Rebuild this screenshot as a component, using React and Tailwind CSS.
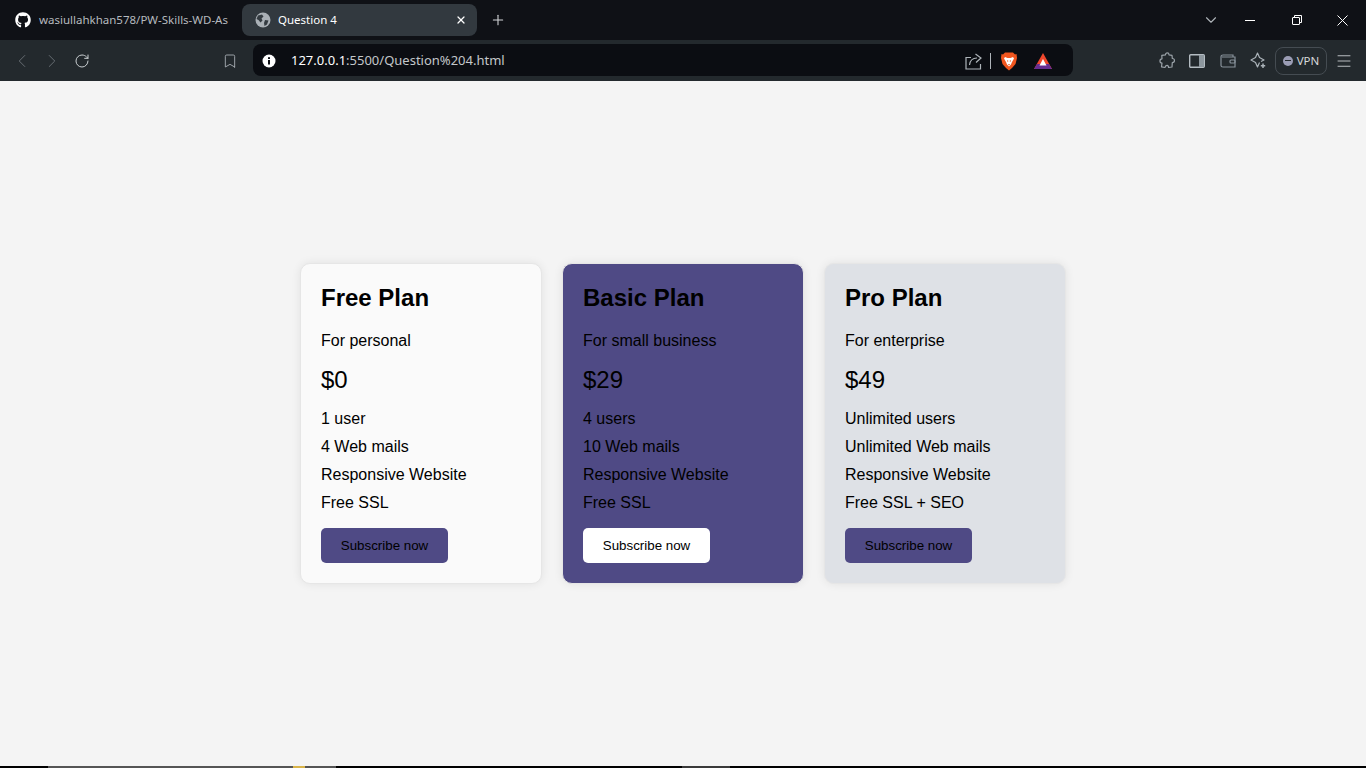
import { FaGithub } from 'react-icons/fa';
import { ChevronLeft, ChevronRight, ChevronDown, RotateCw, Bookmark, Plus, X, Menu } from 'lucide-react';

const plans = [
    {
        name: 'Free Plan',
        tagline: 'For personal',
        price: '$0',
        features: ['1 user', '4 Web mails', 'Responsive Website', 'Free SSL'],
        card: 'bg-[#fafafa]',
        button: 'bg-[#4f4a85]',
    },
    {
        name: 'Basic Plan',
        tagline: 'For small business',
        price: '$29',
        features: ['4 users', '10 Web mails', 'Responsive Website', 'Free SSL'],
        card: 'bg-[#4f4a85]',
        button: 'bg-white',
    },
    {
        name: 'Pro Plan',
        tagline: 'For enterprise',
        price: '$49',
        features: ['Unlimited users', 'Unlimited Web mails', 'Responsive Website', 'Free SSL + SEO'],
        card: 'bg-[#dee1e6]',
        button: 'bg-[#4f4a85]',
    },
];

function GlobeIcon() {
    return (
        <svg width="16" height="16" viewBox="0 0 16 16">
            <circle cx="8" cy="8" r="7.5" fill="#aab0b6" />
            <path d="M3 3.5 L7 2.5 L8.5 4.5 L6.5 6.5 L7.5 8.5 L5.5 10.5 L3.5 8 L1.5 7 Z M10 8 L13.5 8.5 L12 12.5 L9.5 14 L9 11 Z" fill="#343b41" />
        </svg>
    );
}

function ShareIcon() {
    return (
        <svg width="17" height="17" viewBox="0 0 17 17" fill="none" stroke="#aeb4b9" strokeWidth="1.2">
            <path d="M6 4.5 H1 V16 H15.5 V11" />
            <path d="M4.5 12 C5 7.5 8 5 12 5 M10.5 1 L16 5 L11 9.5" />
        </svg>
    );
}

function BraveIcon() {
    return (
        <svg width="16" height="19" viewBox="0 0 16 19">
            <path d="M4 0.5 H12 L14 2.5 L15.5 2 L16 6 L14.5 12 L11 16 L8 18.5 L5 16 L1.5 12 L0 6 L0.5 2 L2 2.5 Z" fill="#f1561f" />
            <path d="M4 5 L6.5 6 H9.5 L12 5 L13 6.5 L11 10 L10 12.5 L8 14.5 L6 12.5 L5 10 L3 6.5 Z" fill="#ffffff" />
            <path d="M6 8 L7.5 9 L6.5 10 Z M10 8 L8.5 9 L9.5 10 Z M7 12 H9 L8 13.5 Z" fill="#f1561f" />
        </svg>
    );
}

function BatIcon() {
    return (
        <svg width="18" height="16" viewBox="0 0 18 16">
            <path d="M9 0 L18 16 H0 Z" fill="#f0472c" />
            <path d="M0 16 L3 11 H15 L18 16 Z" fill="#662d91" />
            <path d="M9 6 L12.5 12.5 H5.5 Z" fill="#ffffff" />
        </svg>
    );
}

function PuzzleIcon() {
    return (
        <svg width="17" height="17" viewBox="0 0 17 17" fill="none" stroke="#9ba3a9" strokeWidth="1.2" strokeLinejoin="round">
            <path d="M6.5 2.8 C6.5 0.3 10 0.3 10 2.8 L13 3.3 L13.3 6.5 C16.2 6.5 16.2 10.5 13.3 10.5 L13 15 L9.5 15.5 C10 13 6.5 12.5 6 15.5 L2.5 14.8 L3 11 C0.3 11 0.3 6.8 3 6.8 L2.8 3.3 Z" />
        </svg>
    );
}

function SidebarIcon() {
    return (
        <svg width="16" height="14" viewBox="0 0 16 14">
            <rect x="0.7" y="0.7" width="14.6" height="12.6" rx="1" fill="none" stroke="#b4bcc2" strokeWidth="1.4" />
            <rect x="10" y="1" width="5" height="12" fill="#8d979e" />
        </svg>
    );
}

function WalletIcon() {
    return (
        <svg width="16" height="14" viewBox="0 0 16 14" fill="none" stroke="#87919a" strokeWidth="1.2">
            <path d="M1 3 C1 1.5 2 1 3 1 H13 V3 M1 3 V11.5 C1 12.5 2 13 3 13 H15 V3 H2" />
            <rect x="10" y="6" width="5" height="3" rx="1" />
        </svg>
    );
}

// four point star with a small plus at the lower right
function LeoIcon() {
    return (
        <svg width="17" height="17" viewBox="0 0 17 17" fill="none" stroke="#aab2b8" strokeWidth="1.2" strokeLinejoin="round">
            <path d="M9.5 10.5 L7.5 15 L5.5 10.5 L1 8 L5.5 5.5 L7.5 1 L9.5 5.5 L14 8 L11 9.5" />
            <path d="M13 11.5 V16 M10.8 13.7 H15.2" strokeWidth="1.5" />
        </svg>
    );
}

function RestoreIcon() {
    return (
        <svg width="10" height="10" viewBox="0 0 10 10" fill="none" stroke="#ffffff" strokeWidth="1">
            <rect x="0.5" y="2.5" width="7" height="7" rx="0.5" />
            <path d="M2.5 2.5 V0.5 H9.5 V7.5 H7.5" />
        </svg>
    );
}

function CloseIcon() {
    return (
        <svg width="11" height="11" viewBox="0 0 11 11" fill="none" stroke="#ffffff" strokeWidth="1">
            <path d="M0.5 0.5 L10.5 10.5 M10.5 0.5 L0.5 10.5" />
        </svg>
    );
}

function InfoIcon() {
    return (
        <svg width="14" height="14" viewBox="0 0 14 14">
            <circle cx="7" cy="7" r="6.5" fill="#ffffff" />
            <rect x="6" y="6" width="2" height="4.5" fill="#0b0d12" />
            <rect x="6" y="3.2" width="2" height="1.8" fill="#0b0d12" />
        </svg>
    );
}

function TabBar() {
    return (
        <div className="h-10 shrink-0 bg-[#0f1116] flex items-center pl-[15px] font-['Noto_Sans',sans-serif]">
            <div className="w-[212px] flex items-center gap-2">
                <FaGithub className="w-4 h-4 shrink-0 text-white" />
                <span className="text-[11.5px] text-[#b6babf] whitespace-nowrap">wasiullahkhan578/PW-Skills-WD-As</span>
            </div>
            <div className="ml-[15px] w-[235px] h-8 rounded-lg bg-[#32393f] flex items-center pl-[13px] pr-2.5">
                <GlobeIcon />
                <span className="ml-[7px] text-[11.5px] text-white flex-1">Question 4</span>
                <X size={12} strokeWidth={2.5} className="text-white" />
            </div>
            <Plus size={16} strokeWidth={1.6} className="ml-[13px] text-[#d5d8da]" />
            <div className="ml-auto flex items-center">
                <ChevronDown size={18} strokeWidth={1.5} className="text-[#aeb4b9] mr-[25px]" />
                <div className="w-2.5 h-px bg-white mr-[37px]" />
                <RestoreIcon />
                <div className="ml-[35px] mr-[18px]"><CloseIcon /></div>
            </div>
        </div>
    );
}

function Toolbar() {
    return (
        <div className="h-[41px] shrink-0 bg-[#23292d] flex items-center font-['Noto_Sans',sans-serif]">
            <ChevronLeft size={22} strokeWidth={1} className="ml-[11px] text-[#6b7277]" />
            <ChevronRight size={22} strokeWidth={1} className="ml-2 text-[#6b7277]" />
            <RotateCw size={16} strokeWidth={1.5} className="ml-[11px] text-[#c9ced1]" />
            <Bookmark size={16} strokeWidth={1.3} className="ml-[132px] text-[#aeb4b9]" />
            <div className="ml-[15px] mb-px w-[820px] h-8 pt-0.5 rounded-lg bg-[#0b0d12] flex items-center pl-[9px] pr-[21px]">
                <InfoIcon />
                <span className="ml-[15px] text-[13px] text-[#c3c7ca]">
                    <span className="text-white">127.0.0.1</span>:5500/Question%204.html
                </span>
                <div className="ml-auto flex items-center">
                    <ShareIcon />
                    <div className="ml-2 mr-2.5 w-px h-4 bg-[#aeb4b9]" />
                    <BraveIcon />
                    <div className="ml-[17px]"><BatIcon /></div>
                </div>
            </div>
            <div className="ml-[86px] flex items-center">
                <PuzzleIcon />
                <div className="ml-[13px]"><SidebarIcon /></div>
                <div className="ml-[15px]"><WalletIcon /></div>
                <div className="ml-[14px]"><LeoIcon /></div>
                <div className="ml-2 w-[52px] h-7 rounded-lg border border-[#454c52] flex items-center justify-center gap-1">
                    <span className="w-2.5 h-2.5 rounded-full bg-[#9b9db5] flex items-center justify-center">
                        <span className="w-1.5 h-px bg-[#23292d]" />
                    </span>
                    <span className="text-[11.5px] text-[#d5d8da]">VPN</span>
                </div>
                <Menu size={18} strokeWidth={1.2} className="ml-[8px] text-[#c9ced1]" />
            </div>
        </div>
    );
}

function PlanCard({ plan }) {
    return (
        <div className={`w-[242px] h-[321px] rounded-[10px] border border-[#e6e6e6] p-5 shadow-[0_0_10px_rgba(0,0,0,0.08)] ${plan.card}`}>
            <h2 className="text-2xl leading-[27px] font-bold mb-[21px]">{plan.name}</h2>
            <p className="text-base leading-[18px] mb-4">{plan.tagline}</p>
            <p className="text-2xl leading-[27px] mb-3">{plan.price}</p>
            <ul>
                {plan.features.map(feature => (
                    <li key={feature} className="text-base leading-7">{feature}</li>
                ))}
            </ul>
            <button className={`mt-[11px] w-[127px] h-[35px] rounded-[5px] text-[13.33px] text-black ${plan.button}`}>
                Subscribe now
            </button>
        </div>
    );
}

export default function App() {
    return (
        <div className="h-screen flex flex-col overflow-hidden bg-[#f4f4f4]">
            <TabBar />
            <Toolbar />
            <main className="flex-1 flex items-center justify-center gap-5 text-black font-['Liberation_Sans',Arial,sans-serif]">
                {plans.map(plan => (
                    <PlanCard key={plan.name} plan={plan} />
                ))}
            </main>
            <div className="h-0.5 shrink-0 bg-black flex">
                <div className="ml-12 w-[288px] bg-[#555555] flex">
                    <div className="ml-[245px] w-[12px] bg-[#d9b44a]" />
                </div>
                <div className="ml-[346px] w-[48px] bg-[#3a3a3a]" />
            </div>
        </div>
    );
}
